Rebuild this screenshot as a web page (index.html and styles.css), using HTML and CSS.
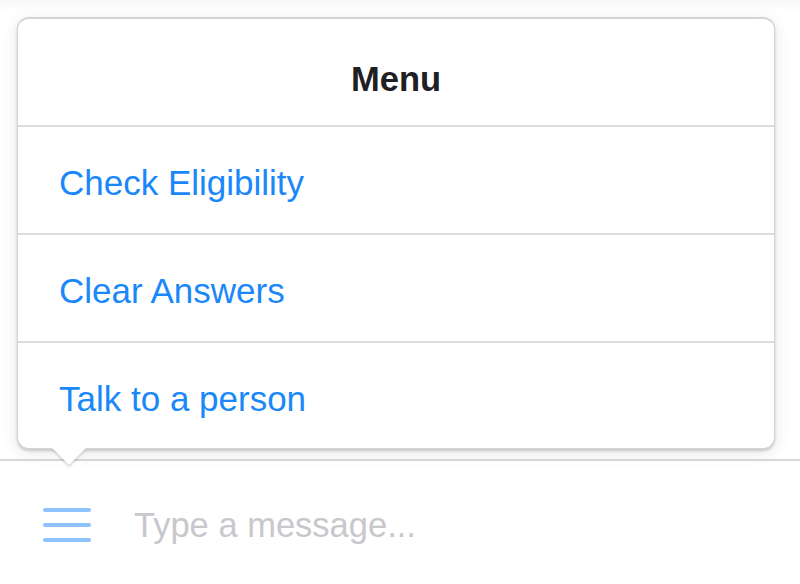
FILE: index.html
```html
<!DOCTYPE html>
<html lang="en">
<head>
    <meta charset="UTF-8">
    <meta name="viewport" content="width=device-width, initial-scale=1.0">
    <title>Menu</title>
    <link rel="stylesheet" href="styles.css">
</head>
<body>
    <div class="screen">
        <div class="menu">
            <div class="menu-title">Menu</div>
            <a class="menu-item" href="#">Check Eligibility</a>
            <a class="menu-item" href="#">Clear Answers</a>
            <a class="menu-item" href="#">Talk to a person</a>
            <div class="menu-arrow"></div>
        </div>

        <div class="composer">
            <button class="menu-button" aria-label="Menu">
                <span></span>
                <span></span>
                <span></span>
            </button>
            <div class="placeholder">Type a message...</div>
        </div>
    </div>
</body>
</html>
```

FILE: styles.css
```css
body {
    margin: 0;
    padding: 0;
    background-color: #fff;
    font-family: "Liberation Sans", Arial, sans-serif;
    width: 800px;
    height: 584px;
    overflow: hidden;
}

.screen {
    display: flex;
    flex-direction: column;
    height: 584px;
    box-shadow: inset 0 14px 14px -12px rgba(0, 0, 0, 0.06);
}

.menu {
    position: relative;
    margin: 17px 0 0 17px;
    width: 758px;
    background-color: #fff;
    border: 1px solid #d4d4d8;
    border-top-width: 2px;
    border-radius: 12px;
    box-shadow: 0 2px 3px rgba(0, 0, 0, 0.18), 0 4px 18px rgba(0, 0, 0, 0.09);
    box-sizing: border-box;
    z-index: 2;
}

.menu-title {
    height: 108px;
    display: flex;
    align-items: center;
    justify-content: center;
    font-size: 34.5px;
    font-weight: bold;
    color: #1e2024;
    padding-top: 14px;
    box-sizing: border-box;
    border-bottom: 2px solid #dcdcdf;
}

.menu-item {
    display: flex;
    align-items: center;
    height: 108px;
    padding: 6px 0 0 41px;
    box-sizing: border-box;
    font-size: 35px;
    color: #1a88f8;
    text-decoration: none;
    border-bottom: 2px solid #dcdcdf;
}

.menu-item:last-of-type {
    border-bottom: none;
    height: 105px;
}

.menu-arrow {
    position: absolute;
    left: 34px;
    bottom: -17px;
    width: 0;
    height: 0;
    border-left: 17px solid transparent;
    border-right: 17px solid transparent;
    border-top: 17px solid #fff;
    filter: drop-shadow(0 2px 1px rgba(0, 0, 0, 0.16));
}

.composer {
    margin-top: 10px;
    flex: 1;
    display: flex;
    align-items: center;
    padding: 4px 0 0 43px;
    border-top: 2px solid #dadada;
    background-color: #fff;
}

.menu-button {
    display: flex;
    flex-direction: column;
    gap: 11px;
    width: 48px;
    padding: 0;
    margin: 0;
    border: none;
    background: none;
    cursor: pointer;
}

.menu-button span {
    display: block;
    height: 4px;
    border-radius: 2px;
    background-color: #8cc3fc;
    filter: blur(0.6px);
}

.placeholder {
    margin-left: 43px;
    font-size: 34.5px;
    color: #c8c8cc;
    padding-top: 2px;
}
```
